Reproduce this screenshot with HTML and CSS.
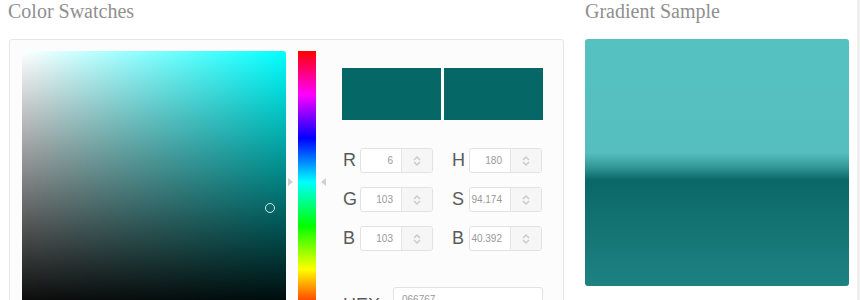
FILE: index.html
```html
<!DOCTYPE html>
<html lang="en">

<head>
   <meta charset="UTF-8">
   <meta name="viewport" content="width=device-width, initial-scale=1.0">
   <title>Color Swatches</title>
   <link rel="stylesheet" href="styles.css">
</head>

<body>
   <div class="page">
      <section class="swatches">
         <h2 class="section-title">Color Swatches</h2>

         <div class="picker">
            <div class="picker__sv">
               <span class="picker__cursor"></span>
            </div>

            <div class="picker__hue">
               <span class="picker__arrow picker__arrow--left"></span>
               <span class="picker__arrow picker__arrow--right"></span>
            </div>

            <div class="picker__side">
               <div class="picker__preview">
                  <span class="picker__swatch"></span>
                  <span class="picker__swatch"></span>
               </div>

               <div class="picker__fields">
                  <label class="field">
                     <span class="field__label">R</span>
                     <span class="field__box">
                        <span class="field__value">6</span>
                        <span class="field__spin"><svg width="10" height="12" viewBox="0 0 10 12"><path d="M2 5 L5 2 L8 5 M2 7 L5 10 L8 7" fill="none" stroke="#cacaca" stroke-width="1.5"/></svg></span>
                     </span>
                  </label>
                  <label class="field">
                     <span class="field__label">H</span>
                     <span class="field__box">
                        <span class="field__value">180</span>
                        <span class="field__spin"><svg width="10" height="12" viewBox="0 0 10 12"><path d="M2 5 L5 2 L8 5 M2 7 L5 10 L8 7" fill="none" stroke="#cacaca" stroke-width="1.5"/></svg></span>
                     </span>
                  </label>

                  <label class="field">
                     <span class="field__label">G</span>
                     <span class="field__box">
                        <span class="field__value">103</span>
                        <span class="field__spin"><svg width="10" height="12" viewBox="0 0 10 12"><path d="M2 5 L5 2 L8 5 M2 7 L5 10 L8 7" fill="none" stroke="#cacaca" stroke-width="1.5"/></svg></span>
                     </span>
                  </label>
                  <label class="field">
                     <span class="field__label">S</span>
                     <span class="field__box">
                        <span class="field__value">94.174</span>
                        <span class="field__spin"><svg width="10" height="12" viewBox="0 0 10 12"><path d="M2 5 L5 2 L8 5 M2 7 L5 10 L8 7" fill="none" stroke="#cacaca" stroke-width="1.5"/></svg></span>
                     </span>
                  </label>

                  <label class="field">
                     <span class="field__label">B</span>
                     <span class="field__box">
                        <span class="field__value">103</span>
                        <span class="field__spin"><svg width="10" height="12" viewBox="0 0 10 12"><path d="M2 5 L5 2 L8 5 M2 7 L5 10 L8 7" fill="none" stroke="#cacaca" stroke-width="1.5"/></svg></span>
                     </span>
                  </label>
                  <label class="field">
                     <span class="field__label">B</span>
                     <span class="field__box">
                        <span class="field__value">40.392</span>
                        <span class="field__spin"><svg width="10" height="12" viewBox="0 0 10 12"><path d="M2 5 L5 2 L8 5 M2 7 L5 10 L8 7" fill="none" stroke="#cacaca" stroke-width="1.5"/></svg></span>
                     </span>
                  </label>
               </div>

               <label class="hex">
                  <span class="hex__label">HEX</span>
                  <span class="hex__box">066767</span>
               </label>
            </div>
         </div>
      </section>

      <section class="sample">
         <h2 class="section-title">Gradient Sample</h2>
         <div class="sample__box"></div>
      </section>
   </div>
</body>

</html>
```

FILE: styles.css
```css
*,
*::before,
*::after {
   box-sizing: border-box;
}

html,
body {
   margin: 0;
   padding: 0;
   background-color: #fff;
   font-family: "Liberation Sans", Arial, sans-serif;
}

.page {
   display: flex;
   align-items: flex-start;
   gap: 21px;
   padding: 0 0 0 8px;
   width: 860px;
   height: 300px;
   overflow: hidden;
   border-right: 3px solid #f0f0f0;
}

.section-title {
   margin: 0;
   height: 39px;
   font-family: "Liberation Serif", "Times New Roman", serif;
   font-size: 20px;
   font-weight: normal;
   line-height: 23px;
   color: #8f8f8f;
}

/* левая колонка */
.swatches {
   width: 556px;
}

.picker {
   display: flex;
   margin-left: 1px;
   padding: 11px 20px 0 12px;
   height: 300px;
   background-color: #fcfcfc;
   border: 1px solid #e6e6e6;
   border-radius: 3px;
}

.picker__sv {
   position: relative;
   flex: 0 0 264px;
   height: 262px;
   border-radius: 3px;
   background:
      linear-gradient(to bottom, rgba(0, 0, 0, 0), #000),
      linear-gradient(to right, #fff, #00ffff);
}

.picker__cursor {
   position: absolute;
   left: 243px;
   top: 152px;
   width: 10px;
   height: 10px;
   border: 1px solid #d8e6e6;
   border-radius: 50%;
}

.picker__hue {
   position: relative;
   flex: 0 0 18px;
   height: 262px;
   margin-left: 12px;
   background: linear-gradient(to bottom,
         #ff0000 0%,
         #ff00ff 16.67%,
         #0000ff 33.33%,
         #00ffff 50%,
         #00ff00 66.67%,
         #ffff00 83.33%,
         #ff0000 100%);
}

.picker__arrow {
   position: absolute;
   top: 127px;
   width: 0;
   height: 0;
   border-top: 4px solid transparent;
   border-bottom: 4px solid transparent;
}

.picker__arrow--left {
   left: -10px;
   border-left: 5px solid #d0d0d0;
}

.picker__arrow--right {
   right: -10px;
   border-right: 5px solid #d0d0d0;
}

.picker__side {
   flex: 0 0 201px;
   margin-left: 26px;
   padding-top: 17px;
}

.picker__preview {
   display: flex;
   gap: 3px;
   height: 52px;
}

.picker__swatch {
   flex: 1;
   background-color: #066767;
}

.picker__fields {
   display: grid;
   grid-template-columns: 91px 91px;
   column-gap: 18px;
   row-gap: 14px;
   margin-top: 28px;
}

.field {
   display: flex;
   align-items: center;
   height: 25px;
}

.field__label {
   width: 18px;
   padding-left: 1px;
   font-size: 18px;
   color: #5a5a5a;
}

.field__box {
   display: flex;
   width: 73px;
   height: 25px;
   background-color: #fff;
   border: 1px solid #e2e2e2;
   border-radius: 3px;
}

.field__value {
   flex: 1;
   padding-right: 8px;
   font-size: 10px;
   line-height: 23px;
   text-align: right;
   color: #999;
}

.field__spin {
   display: flex;
   align-items: center;
   justify-content: center;
   width: 31px;
   background-color: #f6f6f6;
   border-left: 1px solid #e6e6e6;
   border-radius: 0 3px 3px 0;
}

.hex {
   display: flex;
   align-items: flex-start;
   margin-top: 36px;
}

.hex__label {
   width: 51px;
   padding-left: 1px;
   padding-top: 8px;
   font-size: 18px;
   color: #5a5a5a;
}

.hex__box {
   flex: 1;
   height: 25px;
   padding: 6px 8px;
   background-color: #fff;
   border: 1px solid #e2e2e2;
   border-radius: 3px;
   font-size: 10px;
   color: #999;
}

/* правая колонка */
.sample {
   width: 264px;
}

.sample__box {
   height: 247px;
   border-radius: 3px;
   background: linear-gradient(to bottom,
         #56c1c1 0%,
         #55bfbf 46%,
         #3a9d9d 51%,
         #0b6868 57%,
         #0c6a6a 62%,
         #167676 80%,
         #1e8282 100%);
}
```
